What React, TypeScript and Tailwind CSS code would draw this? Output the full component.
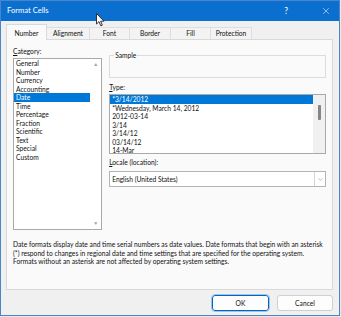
import { ChevronDown, X } from 'lucide-react';

const categories = ['General', 'Number', 'Currency', 'Accounting', 'Date', 'Time', 'Percentage', 'Fraction', 'Scientific', 'Text', 'Special', 'Custom'];
const types = ['*3/14/2012', '*Wednesday, March 14, 2012', '2012-03-14', '3/14', '3/14/12', '03/14/12', '14-Mar'];
const tabs = ['Number', 'Alignment', 'Font', 'Border', 'Fill', 'Protection'];
const tabWidths = ['w-[41px]', 'w-[43px]', 'w-[40px]', 'w-[41px]', 'w-[40px]', 'w-[41px]'];

export default function App() {
  return (
    <div className="relative w-[341px] h-[317px] bg-[#e9e9e9] text-[#111] font-['Lato',sans-serif] text-[6.7px]">
      <div className="flex flex-col w-[340px] h-[316px] border border-[#4a86c7] bg-[#f0f0f0]">
        {/* title bar */}
        <div className="flex items-center h-[20px] bg-[#0b6fd0] text-white pl-[6px]">
          <span className="text-[7.6px]">Format Cells</span>
          <span className="ml-auto mr-[33px] text-[8.5px]">?</span>
          <X className="mr-[8px] w-[10px] h-[10px]" strokeWidth={1.3} />
        </div>

        <div className="flex flex-col pl-[5px] pr-[6px]">
          {/* tabs */}
          <div className="flex items-end h-[18px]">
            {tabs.map((t, i) =>
              i === 0 ? (
                <div key={t} className={`${tabWidths[i]} h-[16px] flex items-center justify-center bg-[#fafafa] border border-b-0 border-[#d9d9d9] -mb-px relative z-10 pt-[2px]`}>
                  {t}
                </div>
              ) : (
                <div key={t} className={`${tabWidths[i]} h-[12px] flex items-center justify-center bg-[#f3f3f3] border border-b-0 border-l-0 border-[#dedede]`}>
                  {t}
                </div>
              ),
            )}
          </div>

          {/* panel */}
          <div className="h-[251px] bg-[#fafafa] border border-[#d9d9d9] flex flex-col px-[6px]">
            <div className="flex gap-[7px]">
              {/* category */}
              <div className="flex flex-col w-[90px]">
                <div className="mt-[4px] h-[14px] leading-[14px]">
                  <span className="underline">C</span>ategory:
                </div>
                <div className="relative h-[172px] bg-white border border-[#a9a9a9] flex">
                  <div className="flex-1 flex flex-col">
                    {categories.map((c) => (
                      <div key={c} className={`h-[8.5px] leading-[8.5px] pl-[2px] ${c === 'Date' ? 'bg-[#0078d7] text-white' : ''}`}>
                        {c}
                      </div>
                    ))}
                  </div>
                  <div className="w-[11px] flex flex-col items-center justify-between py-[3px]">
                    <span className="text-[#a0a0a0] text-[5px] leading-none">▲</span>
                    <span className="text-[#a0a0a0] text-[5px] leading-none">▼</span>
                  </div>
                </div>
              </div>

              {/* right column */}
              <div className="flex flex-col w-[219px]">
                <div className="mt-[15px] relative h-[23px] border border-[#dcdcdc]">
                  <span className="absolute -top-[5px] left-[4px] bg-[#fafafa] px-[1px] leading-[9px]">Sample</span>
                </div>
                <div className="mt-[3px] h-[13px] leading-[13px]">
                  <span className="underline">T</span>ype:
                </div>
                <div className="h-[60px] bg-white border border-[#a9a9a9] flex overflow-hidden">
                  <div className="flex-1 flex flex-col">
                    {types.map((t, i) => (
                      <div key={t} className={`h-[8.5px] leading-[8.5px] pl-[2px] shrink-0 ${i === 0 ? 'bg-[#0078d7] text-white' : ''}`}>
                        {t}
                      </div>
                    ))}
                  </div>
                  <div className="w-[12px] bg-[#f0f0f0] flex justify-center pt-[10px]">
                    <div className="w-[3px] h-[15px] bg-[#858585] rounded-[1px]" />
                  </div>
                </div>
                <div className="mt-[4px] h-[9px] leading-[9px]">
                  <span className="underline">L</span>ocale (location):
                </div>
                <div className="mt-[4px] h-[16px] bg-white border border-[#b4b4b4] flex items-center">
                  <span className="pl-[2px] flex-1">English (United States)</span>
                  <div className="w-[11px] h-full border-l border-[#d4d4d4] flex items-center justify-center">
                    <ChevronDown className="w-[7px] h-[7px] text-[#666]" strokeWidth={1.5} />
                  </div>
                </div>
              </div>
            </div>

            <p className="mt-[10px] leading-[8.5px] whitespace-nowrap">
              Date formats display date and time serial numbers as date values. Date formats that begin with an asterisk
              <br />
              (*) respond to changes in regional date and time settings that are specified for the operating system.
              <br />
              Formats without an asterisk are not affected by operating system settings.
            </p>
          </div>

          {/* buttons */}
          <div className="flex justify-end gap-[8px] mt-[5px]">
            <button className="w-[57px] h-[16px] bg-[#fdfdfd] border border-[#0067c0] rounded-[3px] outline outline-1 outline-[#9ec4ea]">OK</button>
            <button className="w-[56px] h-[16px] bg-[#fdfdfd] border border-[#d0d0d0] rounded-[3px]">Cancel</button>
          </div>
        </div>
      </div>

      {/* mouse cursor */}
      <svg className="absolute left-[96px] top-[13px]" width="9" height="14" viewBox="0 0 9 14">
        <path d="M0.5 0.5 L0.5 11 L3 8.6 L4.8 12.8 L6.3 12.2 L4.6 8.2 L8 8.2 Z" fill="white" stroke="#222" strokeWidth="0.9" strokeLinejoin="round" />
      </svg>
    </div>
  );
}
